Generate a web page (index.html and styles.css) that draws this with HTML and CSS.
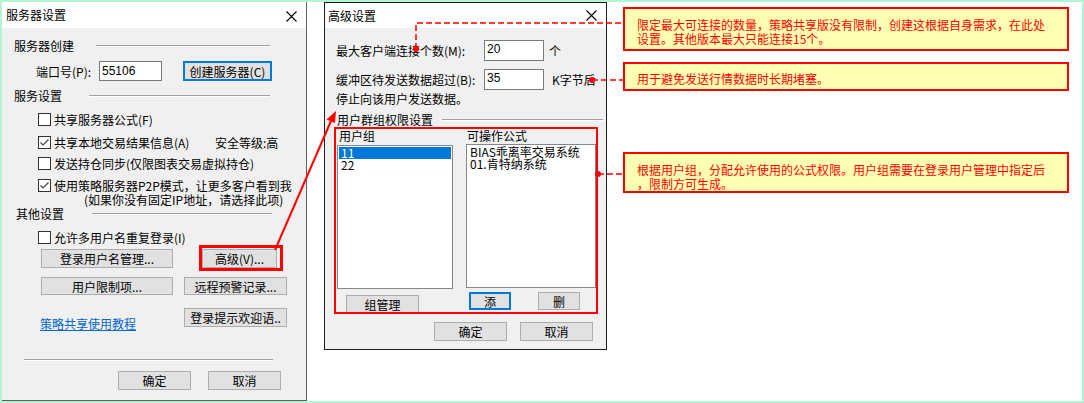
FILE: index.html
```html
<!DOCTYPE html>
<html lang="zh-CN">
<head>
    <meta charset="UTF-8">
    <title>服务器设置 - 高级设置</title>
    <link rel="stylesheet" href="styles.css">
</head>
<body>
<div class="stage">

    <div class="dlg dlg-server">
        <div class="titlebar">
            <span>服务器设置</span>
            <svg class="close" width="11" height="11" viewBox="0 0 11 11"><path d="M0.5 0.5L10.5 10.5M10.5 0.5L0.5 10.5" stroke="#000" stroke-width="1.1"/></svg>
        </div>
        <div class="body">
            <div class="grp grp-1"><span>服务器创建</span><i class="rule"></i></div>
            <div class="row port-row">
                <span class="port-label">端口号(P):</span>
                <span class="field port-field">55106</span>
                <span class="btn btn-focus create-btn">创建服务器(C)</span>
            </div>
            <div class="grp grp-2"><span>服务设置</span><i class="rule"></i></div>
            <div class="check cb-1"><span class="box"></span>共享服务器公式(F)</div>
            <div class="check cb-2"><span class="box on"><svg width="11" height="11" viewBox="0 0 11 11"><path d="M1.5 5.5L4 8L9.5 2.5" fill="none" stroke="#444" stroke-width="1.2"/></svg></span><span class="cb-wide">共享本地交易结果信息(A)</span>安全等级:高</div>
            <div class="check cb-3"><span class="box"></span>发送持仓同步(仅限图表交易虚拟持仓)</div>
            <div class="check cb-4"><span class="box on"><svg width="11" height="11" viewBox="0 0 11 11"><path d="M1.5 5.5L4 8L9.5 2.5" fill="none" stroke="#444" stroke-width="1.2"/></svg></span>使用策略服务器P2P模式，让更多客户看到我</div>
            <div class="cb-note">(如果你没有固定IP地址，请选择此项)</div>
            <div class="grp grp-3"><span>其他设置</span><i class="rule"></i></div>
            <div class="check cb-6"><span class="box"></span>允许多用户名重复登录(I)</div>
            <div class="row btn-row-1">
                <span class="btn btn-wide">登录用户名管理...</span>
                <span class="mark"><span class="btn btn-adv">高级(V)...</span></span>
            </div>
            <div class="row btn-row-2">
                <span class="btn btn-wide">用户限制项...</span>
                <span class="btn btn-side">远程预警记录...</span>
            </div>
            <div class="row btn-row-3">
                <a class="link" href="#">策略共享使用教程</a>
                <span class="btn btn-side welcome-btn">登录提示欢迎语..</span>
            </div>
            <div class="sep"></div>
            <div class="row foot foot-server">
                <span class="btn btn-ok">确定</span>
                <span class="btn btn-ok">取消</span>
            </div>
        </div>
    </div>

    <div class="dlg dlg-adv">
        <div class="titlebar">
            <span>高级设置</span>
            <svg class="close" width="11" height="11" viewBox="0 0 11 11"><path d="M0.5 0.5L10.5 10.5M10.5 0.5L0.5 10.5" stroke="#000" stroke-width="1.1"/></svg>
        </div>
        <div class="body">
            <div class="row adv-r1">
                <span class="adv-label">最大客户端连接个数(M):</span>
                <span class="field adv-field">20</span>
                <span class="unit-1">个</span>
            </div>
            <div class="row adv-r2">
                <span class="adv-label">缓冲区待发送数据超过(B):</span>
                <span class="field adv-field">35</span>
                <span class="unit-2">K字节后</span>
            </div>
            <div class="adv-r3">停止向该用户发送数据。</div>
            <div class="grp grp-adv"><span>用户群组权限设置</span><i class="rule"></i></div>
            <div class="perm">
                <div class="row perm-heads">
                    <span class="head-1">用户组</span>
                    <span>可操作公式</span>
                </div>
                <div class="row perm-lists">
                    <ul class="list list-groups">
                        <li class="sel">11</li>
                        <li>22</li>
                    </ul>
                    <ul class="list list-formulas">
                        <li>BIAS乖离率交易系统</li>
                        <li>01.肯特纳系统</li>
                    </ul>
                </div>
                <div class="row perm-btns">
                    <span class="btn btn-group">组管理</span>
                    <span class="btn btn-focus btn-add">添</span>
                    <span class="btn btn-del">删</span>
                </div>
            </div>
            <div class="row foot foot-adv">
                <span class="btn btn-ok">确定</span>
                <span class="btn btn-ok">取消</span>
            </div>
        </div>
    </div>

    <div class="notes">
        <div class="note note-1">限定最大可连接的数量，策略共享版没有限制，创建这根据自身需求，在此处<br>设置。其他版本最大只能连接15个。</div>
        <div class="note note-2">用于避免发送行情数据时长期堵塞。</div>
        <div class="note note-3">根据用户组，分配允许使用的公式权限。用户组需要在登录用户管理中指定后<br>，限制方可生成。</div>
    </div>

    <svg class="overlay" width="1084" height="403" viewBox="0 0 1084 403">
        <g stroke="#f00" stroke-width="1.5" fill="none" stroke-dasharray="6 3">
            <path d="M416 49V23H623"/>
            <path d="M592 80H623"/>
            <path d="M598 174H624"/>
        </g>
        <g fill="#f00">
            <circle cx="416" cy="49" r="3"/>
            <circle cx="592" cy="80" r="3"/>
            <circle cx="598" cy="174" r="3"/>
        </g>
        <line x1="275" y1="250" x2="331" y2="121" stroke="#f00" stroke-width="2"/>
        <polygon points="336,111 335,123 326.5,119.5" fill="#f00"/>
    </svg>
</div>
</body>
</html>
```

FILE: styles.css
```css
html, body {
    margin: 0;
}
body {
    font-family: "Noto Sans CJK SC", "Liberation Sans", sans-serif;
    font-size: 12px;
    color: #000;
}
.stage {
    position: relative;
    width: 1084px;
    height: 403px;
    box-sizing: border-box;
    border: 2px solid #b4f4d4;
    background: #fff;
    display: flex;
    align-items: flex-start;
}

/* dialogs */
.dlg {
    background: #f0f0f0;
    box-sizing: border-box;
    display: flex;
    flex-direction: column;
    flex-shrink: 0;
}
.dlg-server {
    width: 305px;
    height: 399px;
    border-right: 1px solid #5f5f5f;
    border-bottom: 1px solid #5f5f5f;
}
.dlg-adv {
    width: 283px;
    height: 348px;
    margin-left: 17px;
    border: 1px solid #1e1e1e;
}
.titlebar {
    background: #fff;
    display: flex;
    align-items: center;
    justify-content: space-between;
    flex-shrink: 0;
    line-height: 16px;
}
.dlg-server .titlebar {
    height: 26px;
    padding: 0 9px 0 4px;
}
.dlg-adv .titlebar {
    height: 25px;
    padding: 0 9px 0 3px;
}
.dlg-server .close {
    margin-top: 3px;
}
.body {
    display: flex;
    flex-direction: column;
    align-items: flex-start;
}
.dlg-server .body {
    padding-left: 12px;
}
.dlg-adv .body {
    padding: 0 3px 0 9px;
    align-items: stretch;
}
.row {
    display: flex;
    align-items: center;
}

/* group headers */
.grp {
    display: flex;
    align-items: center;
    width: 258px;
    height: 16px;
    line-height: 16px;
}
.rule {
    flex: 1;
    height: 0;
    border-top: 1px solid #a0a0a0;
    border-bottom: 1px solid #fff;
}
.grp-1 { margin-top: 10px; }
.grp-1 .rule { margin-left: 22px; margin-right: 2px; }
.grp-2 { margin-top: 7px; }
.grp-2 .rule { margin-left: 27px; margin-right: 2px; }
.grp-3 { margin-top: 0; height: 14px; padding-left: 2px; box-sizing: border-box; }
.grp-3 .rule { margin-left: 28px; }

/* fields and buttons */
.field {
    box-sizing: border-box;
    height: 20px;
    background: #fff;
    border: 1px solid #7a7a7a;
    padding-left: 2px;
    font-family: "Liberation Sans", sans-serif;
    line-height: 18px;
}
.btn {
    box-sizing: border-box;
    display: flex;
    align-items: center;
    justify-content: center;
    background: #e1e1e1;
    border: 1px solid #adadad;
    height: 19px;
    white-space: nowrap;
}
.btn-focus {
    border: 2px solid #0078d7;
}

.port-row {
    margin-top: 7px;
    height: 20px;
}
.port-label {
    width: 63px;
    margin-left: 22px;
}
.port-field {
    width: 63px;
}
.create-btn {
    width: 89px;
    height: 20px;
    margin-left: 21px;
}

/* checkboxes */
.check {
    display: flex;
    align-items: center;
    height: 16px;
    padding-left: 24px;
    white-space: nowrap;
}
.box {
    box-sizing: border-box;
    width: 13px;
    height: 13px;
    border: 1px solid #333;
    background: #fff;
    margin-right: 3px;
    display: flex;
}
.cb-wide {
    width: 161px;
}
.cb-1 { margin-top: 7px; }
.cb-2 { margin-top: 7px; }
.cb-3 { margin-top: 5px; }
.cb-4 { margin-top: 6px; }
.cb-6 { margin-top: 8px; }
.cb-note {
    height: 14px;
    line-height: 14px;
    margin-left: 70px;
    white-space: nowrap;
}

/* button rows */
.btn-row-1 { margin-top: 4px; height: 19px; }
.btn-row-2 { margin-top: 9px; height: 18px; }
.btn-row-2 .btn { height: 18px; }
.btn-row-3 { margin-top: 13px; height: 19px; align-items: flex-start; }
.btn-wide {
    width: 132px;
    margin-left: 27px;
}
.btn-side {
    width: 103px;
    margin-left: 11px;
}
.mark {
    margin: -4px 0 -3px 26px;
    border: 3px solid #f00;
    padding: 1px 3px 0 0;
    display: flex;
}
.btn-adv {
    width: 75px;
}
.link {
    color: #0066cc;
    text-decoration: underline;
    margin: 9px 0 0 26px;
    width: 96px;
    line-height: 14px;
    white-space: nowrap;
}
.welcome-btn {
    margin-left: 48px;
}
.sep {
    margin: 32px 0 0 10px;
    width: 249px;
    border-top: 1px solid #a0a0a0;
    border-bottom: 1px solid #fff;
}
.foot .btn-ok {
    width: 73px;
}
.foot-server {
    margin: 10px 0 0 104px;
}
.foot-server .btn-ok + .btn-ok {
    margin-left: 17px;
}

/* advanced dialog */
.adv-r1 { margin-top: 12px; height: 21px; }
.adv-r2 { margin-top: 8px; height: 21px; }
.adv-label {
    width: 148px;
    margin-left: 2px;
    white-space: nowrap;
}
.adv-field {
    width: 60px;
    height: 21px;
    align-self: flex-start;
    line-height: 17px;
}
.unit-1 { margin-left: 5px; }
.unit-2 { margin-left: 8px; }
.adv-r3 {
    margin: 1px 0 0 2px;
    height: 16px;
    line-height: 16px;
}
.grp-adv {
    margin-top: 5px;
    height: 15px;
    width: auto;
    padding-left: 3px;
}
.grp-adv .rule { margin-left: 9px; }

.perm {
    box-sizing: border-box;
    width: 264px;
    height: 187px;
    border: 2px solid #f00;
}
.perm-heads {
    height: 14px;
    line-height: 14px;
}
.head-1 {
    width: 128px;
    padding-left: 3px;
}
.perm-lists {
    margin-top: 2px;
    align-items: flex-start;
}
.list {
    list-style: none;
    margin: 0;
    padding: 1px;
    box-sizing: border-box;
    height: 144px;
    background: #fff;
    border: 1px solid #828790;
}
.list li {
    height: 12px;
    line-height: 12px;
    padding-left: 2px;
    white-space: nowrap;
}
.list li.sel {
    background: #0078d7;
    color: #fff;
}
.list-groups {
    width: 116px;
    margin-left: 1px;
}
.list-formulas {
    width: 130px;
    margin: -1px 0 0 13px;
}
.perm-btns {
    margin-top: 3px;
    height: 20px;
    align-items: flex-start;
}
.btn-group {
    width: 73px;
    height: 17px;
    margin: 3px 0 0 10px;
    border-bottom: none;
}
.btn-add {
    width: 42px;
    height: 18px;
    margin-left: 50px;
}
.btn-del {
    width: 42px;
    height: 18px;
    margin-left: 27px;
}
.foot-adv {
    margin: 8px 0 0 100px;
}
.foot-adv .btn-ok + .btn-ok {
    margin-left: 13px;
}

/* callouts */
.notes {
    margin-left: 16px;
    width: 446px;
    display: flex;
    flex-direction: column;
    flex-shrink: 0;
}
.note {
    box-sizing: border-box;
    background: #ffffb4;
    border: 2px solid #f00;
    color: #f00;
    padding-left: 12px;
    white-space: nowrap;
}
.note-1 {
    margin-top: 5px;
    height: 44px;
    padding-top: 9px;
    line-height: 14px;
}
.note-2 {
    margin-top: 11px;
    height: 29px;
    padding-top: 8px;
    line-height: 14px;
}
.note-3 {
    margin-top: 61px;
    height: 41px;
    padding-top: 9px;
    line-height: 14px;
}

.overlay {
    position: absolute;
    left: -2px;
    top: -2px;
    pointer-events: none;
}
```
